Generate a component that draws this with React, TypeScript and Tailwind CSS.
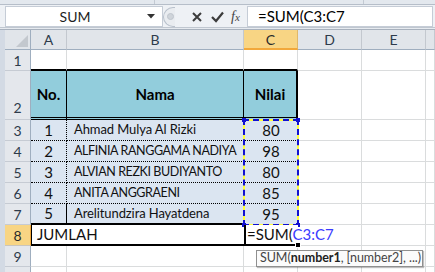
import React from "react";

const FONT = "font-['Lato','Open_Sans',sans-serif]";

function RowHead({ n, active, bottom }: { n: string; active?: boolean; bottom?: boolean }) {
  return (
    <div
      className={`flex justify-center ${bottom ? "items-end pb-[1px]" : "items-center"} border-b border-r text-[14px] ${
        active
          ? "bg-[#f8d584] border-b-[#c9c5bd] border-r-[#f2a83b] text-[#2b2b2b]"
          : "bg-[#e4e7ec] border-b-[#c6cbd3] border-r-[#9faebf] text-[#2e3b4b]"
      }`}
    >
      {n}
    </div>
  );
}

function ColHead({ c, active }: { c: string; active?: boolean }) {
  return (
    <div
      className={`flex items-center justify-center border-r text-[14px] ${
        active
          ? "bg-[#f8d584] border-b-2 border-b-[#f2a83b] border-r-[#e0b86a] text-[#2b2b2b]"
          : "bg-[#e1e5ea] border-b border-b-[#9faebf] border-r-[#c3c8cf] text-[#2e3b4b]"
      }`}
    >
      {c}
    </div>
  );
}

function G({ className = "", children }: { className?: string; children?: React.ReactNode }) {
  return <div className={`border-r border-b border-[#dadcdd] bg-white ${className}`}>{children}</div>;
}

const data = [
  { no: "1", nama: "Ahmad Mulya Al Rizki", nilai: "80", caps: false },
  { no: "2", nama: "ALFINIA RANGGAMA NADIYA", nilai: "98", caps: true },
  { no: "3", nama: "ALVIAN REZKI BUDIYANTO", nilai: "80", caps: true },
  { no: "4", nama: "ANITA ANGGRAENI", nilai: "85", caps: true },
  { no: "5", nama: "Arelitundzira Hayatdena", nilai: "95", caps: false },
];

export default function App() {
  return (
    <div className={`relative w-[435px] h-[272px] overflow-hidden bg-[#dfe4ea] ${FONT}`}>
      {/* top ribbon remnant */}
      <div className="h-[5px] flex border-b border-[#b6bec9] bg-[#e3e8ee]">
        <div className="w-[155px] border-r border-[#c3cad3]" />
        <div className="w-[209px] border-r border-[#c3cad3]" />
      </div>
      {/* formula bar */}
      <div className="h-[22px] flex items-stretch pl-[5px] pr-[2px] bg-[#eef1f5] pt-[1px]">
        <div className="w-[158px] bg-white border border-[#c5ccd6] flex items-center">
          <div className="w-[138px] text-center text-[14px] text-[#1e1e1e]">SUM</div>
          <svg width="9" height="5" viewBox="0 0 9 5" className="ml-[3px]">
            <path d="M0 0 H8 L4 4.5 Z" fill="#333" />
          </svg>
        </div>
        <div className="w-[12px] flex items-center">
          <div className="w-[12px] h-[20px] rounded-l-full border border-r-0 border-[#b9c1cc] bg-[#e9ecf0] flex items-center justify-end pr-[1px]">
            <div className="w-[7px] h-[7px] rounded-full bg-[#cfd4da] border border-[#bfc5cd]" />
          </div>
        </div>
        <div className="w-[72px] flex items-center bg-[#eef1f5]">
          <svg width="12" height="12" viewBox="0 0 12 12" className="ml-[16px]">
            <path d="M2 2 L10 10 M10 2 L2 10" stroke="#3c3c3c" strokeWidth="2" />
          </svg>
          <svg width="13" height="12" viewBox="0 0 13 12" className="ml-[8px]">
            <path d="M1 6 L5 10 L12 1.5" stroke="#3c3c3c" strokeWidth="2.2" fill="none" />
          </svg>
          <span className="ml-[7px] text-[14px] italic text-[#444] font-['Liberation_Serif',serif] leading-none">
            f<span className="text-[11px]">x</span>
          </span>
        </div>
        <div className="flex-1 bg-white border border-[#c5ccd6] flex items-center pl-[10px] text-[15px] text-black">
          =SUM(C3:C7
        </div>
      </div>
      <div className="h-[3px] border-t border-[#c0c7d0] bg-[#e6eaef] border-b border-b-[#a8b1bd]" />

      {/* sheet */}
      <div className="flex">
        <div className="w-[5px] bg-[#d3dae4]" />
        <div className="grid grid-cols-[26px_36px_177px_54px_64px_64px_9px] grid-rows-[20px_21px_49px_21px_21px_21px_21px_21px_21px_21px_21px] text-[15px] text-black">
          {/* header row */}
          <div className="bg-[#e1e5ea] border-r border-b border-[#9faebf] relative">
            <svg width="12" height="12" viewBox="0 0 12 12" className="absolute right-[2px] bottom-[2px]">
              <path d="M12 0 L12 12 L0 12 Z" fill="#c3c8ce" />
            </svg>
          </div>
          <ColHead c="A" />
          <ColHead c="B" />
          <ColHead c="C" active />
          <ColHead c="D" />
          <ColHead c="E" />
          <ColHead c="" />

          {/* row 1 */}
          <RowHead n="1" />
          <G className="border-b-2 border-b-black" />
          <G className="border-b-2 border-b-black" />
          <G className="border-b-2 border-b-black" />
          <G />
          <G />
          <G />

          {/* row 2 */}
          <RowHead n="2" bottom />
          <div className="bg-[#92cddc] border-r border-r-black border-b-[3px] border-double border-b-black flex items-center justify-center font-bold">
            No.
          </div>
          <div className="bg-[#92cddc] border-r border-r-black border-b-[3px] border-double border-b-black flex items-center justify-center font-bold">
            Nama
          </div>
          <div className="bg-[#92cddc] border-r-2 border-r-black border-b-[3px] border-double border-b-black flex items-center justify-center font-bold">
            Nilai
          </div>
          <G />
          <G />
          <G />

          {/* rows 3-7 */}
          {data.map((d, i) => {
            const last = i === data.length - 1;
            const bb = last ? "border-b-2 border-solid border-b-black" : "border-b border-dotted border-b-black";
            return (
              <React.Fragment key={d.no}>
                <RowHead n={String(i + 3)} />
                <div className={`bg-[#dbe5f1] ${bb} border-r border-r-black flex items-center justify-center text-[#111]`}>
                  <span className="border-solid">{d.no}</span>
                </div>
                <div
                  className={`bg-[#dbe5f1] ${bb} flex items-center pl-[7px] whitespace-nowrap overflow-hidden text-[#111] ${
                    d.caps ? "text-[12.5px] tracking-[-0.4px]" : "text-[13px] tracking-[-0.1px]"
                  }`}
                >
                  {d.nama}
                </div>
                <div className={`bg-[#dbe5f1] ${last ? "" : "border-b border-dotted border-b-black"} flex items-center justify-center text-[#111]`}>
                  {d.nilai}
                </div>
                <G />
                <G />
                <G />
              </React.Fragment>
            );
          })}

          {/* row 8 */}
          <RowHead n="8" active />
          <div className="col-span-2 bg-white border-l border-l-black border-b-2 border-b-black flex items-center pl-[5px] text-[#111]">
            JUMLAH
          </div>
          <div className="relative z-10 bg-white border-l-2 border-l-black border-b-2 border-b-black flex items-center pl-[1px] whitespace-nowrap text-[#111]">
            <span>
              =SUM(<span className="text-[#3b3bff]">C3:C7</span>
            </span>
            <div className="absolute right-[-3px] bottom-[-4px] w-[6px] h-[6px] bg-black border border-white" />
          </div>
          <G />
          <G />
          <G />

          {/* row 9 */}
          <RowHead n="9" />
          <G />
          <G />
          <G />
          <G />
          <G />
          <G />

          {/* row 10 (only its top edge is visible) */}
          <RowHead n="" />
          <G />
          <G />
          <G />
          <G />
          <G />
          <G />
        </div>
      </div>

      {/* marching ants around C3:C7 */}
      <div className="absolute left-[243px] top-[119px] w-[56px] h-[107px] border-2 border-[#ffff3c]" />
      <div className="absolute left-[243px] top-[119px] w-[56px] h-[107px] border-2 border-dashed border-[#1010d0]" />
      <div className="absolute left-[242px] top-[118px] w-[4px] h-[4px] bg-[#1010d0]" />
      <div className="absolute left-[296px] top-[118px] w-[4px] h-[4px] bg-[#1010d0]" />
      <div className="absolute left-[242px] top-[223px] w-[4px] h-[4px] bg-[#1010d0]" />
      <div className="absolute left-[296px] top-[223px] w-[4px] h-[4px] bg-[#1010d0]" />

      {/* tooltip */}
      <div className="absolute left-[256px] top-[250px] w-[167px] h-[17px] bg-[#fbfbfb] border border-[#8f8f8f] shadow-[1px_1px_1px_rgba(0,0,0,0.25)] flex items-center pl-[3px] text-[12.5px] tracking-[-0.05px] text-[#444] whitespace-nowrap">
        SUM(<span className="font-bold text-[#222]">number1</span>, [number2], ...)
      </div>
    </div>
  );
}
